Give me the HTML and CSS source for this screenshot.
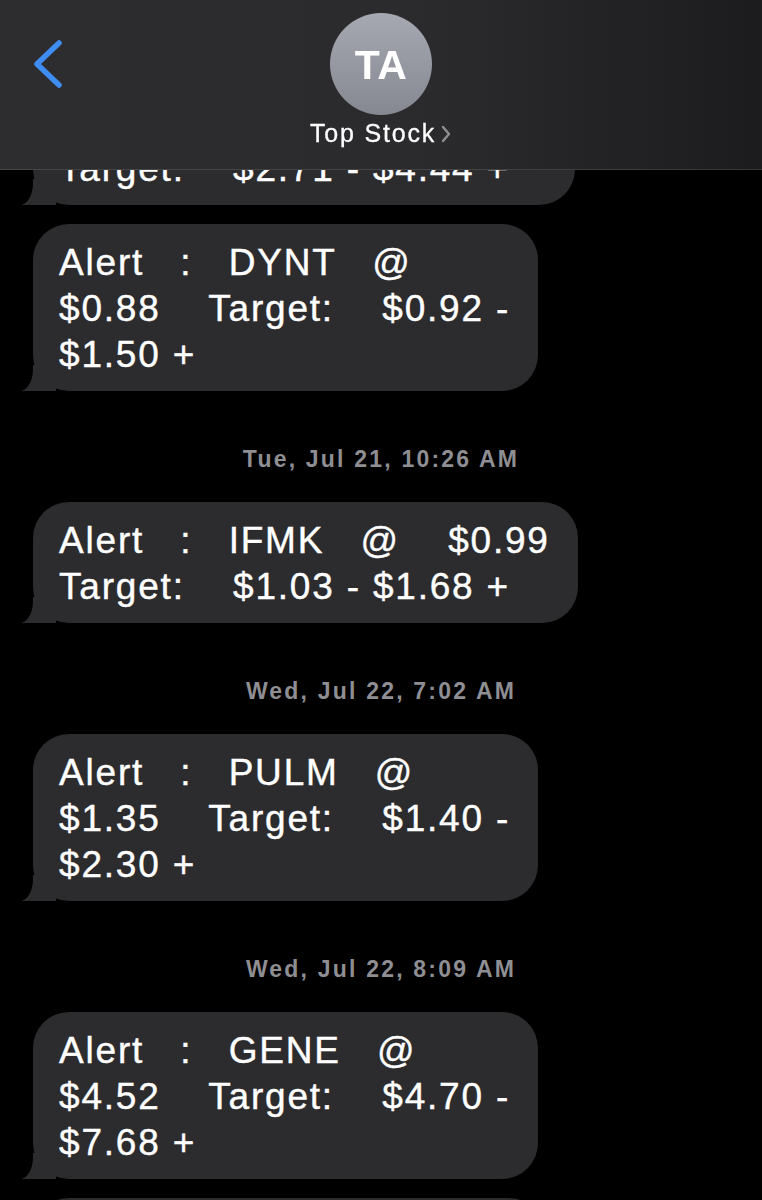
FILE: index.html
```html
<!DOCTYPE html>
<html lang="en">
  <head>
    <meta charset="UTF-8" />
    <link rel="stylesheet" href="styles.css">
    <meta name="viewport" content="width=device-width, initial-scale=1.0" />
    <title>Top Stock</title>
  </head>
  <body>
    <header class="top-bar">
      <div class="back">
        <svg width="34" height="50" viewBox="0 0 34 50">
          <path d="M27 4 L5 25 L27 46" fill="none" stroke="#3f8cf2" stroke-width="5.5" stroke-linecap="round" stroke-linejoin="round" />
        </svg>
      </div>
      <div class="contact">
        <div class="avatar">TA</div>
        <div class="name">Top Stock<svg class="chev" width="12" height="18" viewBox="0 0 12 18"><path d="M3 2 L9 9 L3 16" fill="none" stroke="#8e8e93" stroke-width="2.4" stroke-linecap="round" stroke-linejoin="round" /></svg></div>
      </div>
      <div></div>
    </header>

    <main class="chat">
      <!-- scrolled up, top half is under the header -->
      <div class="bubble clipped">Target:    $2.71 - $4.44 +</div>
      <div class="bubble">Alert   :   DYNT   @<br>$0.88    Target:    $0.92 -<br>$1.50 +</div>

      <p class="stamp">Tue, Jul 21, 10:26 AM</p>
      <div class="bubble">Alert   :   IFMK   @    $0.99<br>Target:    $1.03 - $1.68 +</div>

      <p class="stamp">Wed, Jul 22, 7:02 AM</p>
      <div class="bubble">Alert   :   PULM   @<br>$1.35    Target:    $1.40 -<br>$2.30 +</div>

      <p class="stamp">Wed, Jul 22, 8:09 AM</p>
      <div class="bubble">Alert   :   GENE   @<br>$4.52    Target:    $4.70 -<br>$7.68 +</div>

      <div class="bubble cut"></div>
    </main>
  </body>
</html>
```

FILE: styles.css
```css
* {
  box-sizing: border-box;
}

body {
  background-color: #000;
  color: #fff;
  font-family: "Liberation Sans", Arial, Helvetica, sans-serif;
  margin: 0;
  overflow: hidden;
}

/* header bar sits over the scrolled messages */
.top-bar {
  position: fixed;
  top: 0;
  left: 0;
  right: 0;
  height: 170px;
  z-index: 5;
  display: grid;
  grid-template-columns: 1fr auto 1fr;
  background: linear-gradient(90deg, #2d2d2f 0%, #2b2b2d 55%, #1c1c1e 100%);
  border-bottom: 1px solid rgba(255, 255, 255, 0.12);
}

.back {
  padding: 39px 0 0 32px;
}

.contact {
  display: flex;
  flex-direction: column;
  align-items: center;
  padding-top: 13px;
}

.avatar {
  width: 102px;
  height: 102px;
  border-radius: 50%;
  background: linear-gradient(180deg, #a7a9b2 0%, #868891 100%);
  display: flex;
  align-items: center;
  justify-content: center;
  font-size: 41px;
  line-height: 46px;
  font-weight: bold;
  letter-spacing: 0.5px;
  padding-top: 2px;
}

.name {
  margin-top: 5px;
  font-size: 25px;
  line-height: 26px;
  letter-spacing: 1.8px;
  white-space: nowrap;
  -webkit-text-stroke: 0.3px #fff;
}

.name .chev {
  margin-left: 4px;
  vertical-align: -1px;
}

.chat {
  display: flex;
  flex-direction: column;
  align-items: flex-start;
  padding: 84px 0 0 33px;
}

.bubble {
  position: relative;
  background-color: #2c2c2e;
  border-radius: 36px;
  padding: 16px 28px 13px 26px;
  font-size: 37px;
  line-height: 46px;
  letter-spacing: 1.8px;
  white-space: pre;
  margin-bottom: 19px;
  -webkit-text-stroke: 0.4px #fff;
}

/* tail at the bottom left */
.bubble::before {
  content: "";
  position: absolute;
  bottom: 0;
  left: -11px;
  width: 34px;
  height: 26px;
  background-color: #2c2c2e;
}

.bubble::after {
  content: "";
  position: absolute;
  bottom: 0;
  left: -24px;
  width: 24px;
  height: 30px;
  background-color: #000;
  border-bottom-right-radius: 13px 22px;
}

.bubble.clipped {
  width: 542px;
  padding-top: 62px;
}

.bubble.cut {
  width: 512px;
  height: 160px;
}

.stamp {
  align-self: center;
  margin: 35px 0 29px -33px;
  font-size: 23px;
  line-height: 28px;
  font-weight: bold;
  letter-spacing: 2.2px;
  color: #8e8e93;
}
```
